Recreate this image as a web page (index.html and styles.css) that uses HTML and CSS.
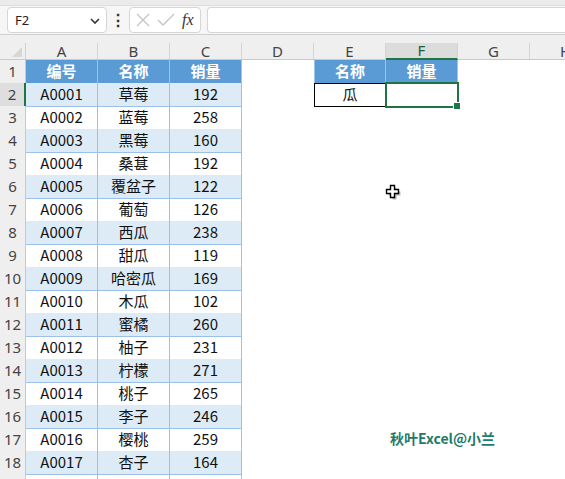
FILE: index.html
```html
<!DOCTYPE html>
<html>
<head>
<meta charset="utf-8">
<link rel="stylesheet" href="styles.css">
</head>
<body>
<div class="app">
  <div class="topstrip"></div>
  <div class="bar">
    <div class="namebox"><span>F2</span>
      <svg class="chev" width="10" height="6" viewBox="0 0 10 6"><path d="M1 1 L5 5 L9 1" fill="none" stroke="#333" stroke-width="1.6"/></svg>
    </div>
    <div class="dots">⋮</div>
    <div class="fxbox">
      <svg width="16" height="16" viewBox="0 0 16 16"><path d="M2 2 L14 14 M14 2 L2 14" stroke="#c4c4c4" stroke-width="1.3" fill="none"/></svg>
      <svg width="18" height="16" viewBox="0 0 18 16"><path d="M1 8 L6 13 L17 2" stroke="#c4c4c4" stroke-width="1.3" fill="none"/></svg>
      <span class="fx">fx</span>
    </div>
    <div class="formula"></div>
  </div>
  <div class="sheet">
    <div class="row colhead">
      <div class="corner"><span class="tri"></span></div>
      <div class="ch"><span>A</span></div>
      <div class="ch"><span>B</span></div>
      <div class="ch"><span>C</span></div>
      <div class="ch"><span>D</span></div>
      <div class="ch"><span>E</span></div>
      <div class="ch sel"><span>F</span></div>
      <div class="ch"><span>G</span></div>
      <div class="ch"><span>H</span></div>
    </div>
    <div class="row"><div class="rh">1</div><div class="c h">编号</div><div class="c h">名称</div><div class="c h">销量</div><div class="c"></div><div class="c h hl">名称</div><div class="c h">销量</div><div class="c"></div><div class="c"></div></div>
    <div class="row"><div class="rh rsel">2</div><div class="c d a">A0001</div><div class="c d a">草莓</div><div class="c d a">192</div><div class="c"></div><div class="c lookup">瓜</div><div class="c active"></div><div class="c"></div><div class="c"></div></div>
    <div class="row"><div class="rh">3</div><div class="c d">A0002</div><div class="c d">蓝莓</div><div class="c d">258</div><div class="c"></div><div class="c"></div><div class="c"></div><div class="c"></div><div class="c"></div></div>
    <div class="row"><div class="rh">4</div><div class="c d a">A0003</div><div class="c d a">黑莓</div><div class="c d a">160</div><div class="c"></div><div class="c"></div><div class="c"></div><div class="c"></div><div class="c"></div></div>
    <div class="row"><div class="rh">5</div><div class="c d">A0004</div><div class="c d">桑葚</div><div class="c d">192</div><div class="c"></div><div class="c"></div><div class="c"></div><div class="c"></div><div class="c"></div></div>
    <div class="row"><div class="rh">6</div><div class="c d a">A0005</div><div class="c d a">覆盆子</div><div class="c d a">122</div><div class="c"></div><div class="c"></div><div class="c"></div><div class="c"></div><div class="c"></div></div>
    <div class="row"><div class="rh">7</div><div class="c d">A0006</div><div class="c d">葡萄</div><div class="c d">126</div><div class="c"></div><div class="c"></div><div class="c"></div><div class="c"></div><div class="c"></div></div>
    <div class="row"><div class="rh">8</div><div class="c d a">A0007</div><div class="c d a">西瓜</div><div class="c d a">238</div><div class="c"></div><div class="c"></div><div class="c"></div><div class="c"></div><div class="c"></div></div>
    <div class="row"><div class="rh">9</div><div class="c d">A0008</div><div class="c d">甜瓜</div><div class="c d">119</div><div class="c"></div><div class="c"></div><div class="c"></div><div class="c"></div><div class="c"></div></div>
    <div class="row"><div class="rh">10</div><div class="c d a">A0009</div><div class="c d a">哈密瓜</div><div class="c d a">169</div><div class="c"></div><div class="c"></div><div class="c"></div><div class="c"></div><div class="c"></div></div>
    <div class="row"><div class="rh">11</div><div class="c d">A0010</div><div class="c d">木瓜</div><div class="c d">102</div><div class="c"></div><div class="c"></div><div class="c"></div><div class="c"></div><div class="c"></div></div>
    <div class="row"><div class="rh">12</div><div class="c d a">A0011</div><div class="c d a">蜜橘</div><div class="c d a">260</div><div class="c"></div><div class="c"></div><div class="c"></div><div class="c"></div><div class="c"></div></div>
    <div class="row"><div class="rh">13</div><div class="c d">A0012</div><div class="c d">柚子</div><div class="c d">231</div><div class="c"></div><div class="c"></div><div class="c"></div><div class="c"></div><div class="c"></div></div>
    <div class="row"><div class="rh">14</div><div class="c d a">A0013</div><div class="c d a">柠檬</div><div class="c d a">271</div><div class="c"></div><div class="c"></div><div class="c"></div><div class="c"></div><div class="c"></div></div>
    <div class="row"><div class="rh">15</div><div class="c d">A0014</div><div class="c d">桃子</div><div class="c d">265</div><div class="c"></div><div class="c"></div><div class="c"></div><div class="c"></div><div class="c"></div></div>
    <div class="row"><div class="rh">16</div><div class="c d a">A0015</div><div class="c d a">李子</div><div class="c d a">246</div><div class="c"></div><div class="c"></div><div class="c"></div><div class="c"></div><div class="c"></div></div>
    <div class="row"><div class="rh">17</div><div class="c d">A0016</div><div class="c d">樱桃</div><div class="c d">259</div><div class="c"></div><div class="c"></div><div class="c"></div><div class="c"></div><div class="c"></div></div>
    <div class="row"><div class="rh">18</div><div class="c d a">A0017</div><div class="c d a">杏子</div><div class="c d a">164</div><div class="c"></div><div class="c"></div><div class="c"></div><div class="c"></div><div class="c"></div></div>
    <div class="row"><div class="rh"></div><div class="c d"></div><div class="c d"></div><div class="c d"></div><div class="c"></div><div class="c"></div><div class="c"></div><div class="c"></div><div class="c"></div></div>
  </div>
  <svg class="cursor" width="16" height="16" viewBox="0 0 16 16">
    <path d="M6.5 2.5 H10.5 V6.5 H14.5 V10.5 H10.5 V14.5 H6.5 V10.5 H2.5 V6.5 H6.5 Z" fill="#888" opacity="0.6" transform="translate(1 1)"/>
    <path d="M5.5 1.5 H9.5 V5.5 H13.5 V9.5 H9.5 V13.5 H5.5 V9.5 H1.5 V5.5 H5.5 Z" fill="#fff" stroke="#000" stroke-width="1.4"/>
  </svg>
  <div class="mark">秋叶Excel@小兰</div>
</div>
</body>
</html>
```
FILE: styles.css
```css
* { box-sizing: border-box; }
html, body { margin: 0; padding: 0; }
body {
  width: 565px;
  height: 479px;
  overflow: hidden;
  background: #fff;
  font-family: "Noto Sans", "Noto Sans CJK SC", sans-serif;
}
.app { position: relative; width: 565px; height: 479px; overflow: hidden; }
.topstrip {
  height: 6px;
  background: #ebebeb;
  border-bottom: 1px solid #dedede;
}
.bar {
  height: 29px;
  background: #f6f6f6;
  border-bottom: 1px solid #cfcfcf;
  display: flex;
  align-items: flex-start;
  padding: 1px 0 0 7px;
}
.namebox {
  width: 100px;
  height: 26px;
  background: #fff;
  border: 1px solid #d6d6d6;
  border-radius: 4px;
  display: flex;
  align-items: center;
  justify-content: space-between;
  padding: 0 6px 0 7px;
  font-size: 13px;
  color: #222;
}
.chev { margin-top: 1px; }
.dots {
  width: 22px;
  text-align: center;
  font-size: 16px;
  line-height: 26px;
  color: #333;
  font-weight: bold;
}
.fxbox {
  width: 72px;
  height: 26px;
  background: #fff;
  border: 1px solid #d6d6d6;
  border-radius: 4px;
  display: flex;
  align-items: center;
  gap: 6px;
  padding-left: 5px;
}
.fx {
  font-family: "Liberation Serif", "DejaVu Serif", serif;
  font-style: italic;
  font-size: 16px;
  color: #333;
  margin-left: 1px;
}
.formula {
  margin-left: 6px;
  flex: 1;
  height: 26px;
  background: #fff;
  border: 1px solid #d6d6d6;
  border-right: none;
  border-radius: 4px 0 0 4px;
}
.sheet { display: flex; flex-direction: column; }
.row {
  display: grid;
  grid-template-columns: 26px repeat(8, 72px);
  height: 23px;
}
.colhead {
  height: 25px;
  background: #efefef;
  border-bottom: 1px solid #c9c9c9;
}
.corner { position: relative; border-right: 1px solid #d0d0d0; margin-top: 8px; }
.tri {
  position: absolute;
  right: 3px;
  bottom: 3px;
  width: 0; height: 0;
  border-left: 10px solid transparent;
  border-bottom: 10px solid #d6d6d6;
}
.ch { padding-top: 8px; }
.ch span {
  display: block;
  height: 16px;
  line-height: 16px;
  text-align: center;
  font-size: 15px;
  color: #444;
  border-right: 1px solid #d4d4d4;
}
.ch.sel span {
  background: #dcdcdc;
  height: 17px;
  border-bottom: 2px solid #217346;
  line-height: 15px;
  color: #1d5f3a;
}
.rh {
  background: #efefef;
  border-right: 1px solid #c9c9c9;
  border-bottom: 1px solid #dadada;
  text-align: center;
  font-size: 15px;
  line-height: 23px;
  color: #444;
}
.rh.rsel {
  background: #dedede;
  border-right: 2px solid #217346;
}
.c {
  font-family: "Noto Sans CJK SC", sans-serif;
  font-size: 15px;
  line-height: 22px;
  text-align: center;
  color: #111;
}
.c.h {
  background: #5b9bd5;
  color: #fff;
  font-weight: bold;
  border-right: 1px solid #9ec3e6;
}
.c.h.hl { border-left: 1px solid #9ec3e6; }
.c.d {
  border-right: 1px solid #9bc2e6;
  border-bottom: 1px solid #9bc2e6;
}
.c.d.a { background: #ddebf7; }
.c.lookup { border: 1.5px solid #000; line-height: 20px; }
.c.active { position: relative; }
.c.active::after {
  content: "";
  position: absolute;
  left: -1px; top: -1px; right: -1px; bottom: -1px;
  border: 2px solid #217346;
}
.c.active::before {
  content: "";
  position: absolute;
  right: -3px;
  bottom: -3px;
  width: 6px;
  height: 6px;
  background: #217346;
  border: 1px solid #fff;
  z-index: 2;
}
.cursor { position: absolute; left: 385px; top: 184px; }
.mark {
  position: absolute;
  left: 390px;
  top: 428px;
  font-family: "Noto Sans CJK SC", sans-serif;
  font-weight: bold;
  font-size: 14px;
  color: #1f7b6b;
}
```
